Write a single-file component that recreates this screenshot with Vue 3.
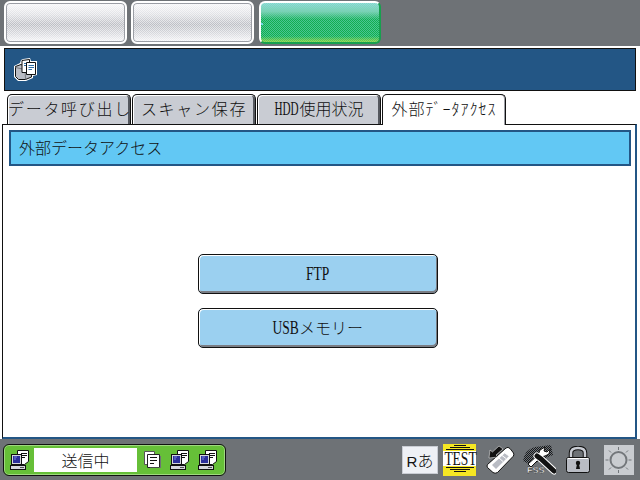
<script setup>
const tabs = [
  { id: 1, label: "データ呼び出し", spaced: true },
  { id: 2, label: "スキャン保存", spaced: true },
  { id: 3, latin: "HDD", label: "使用状況" },
  { id: 4, label: "外部ﾃﾞｰﾀｱｸｾｽ", active: true }
]
</script>

<template>
  <div class="screen">
    <div class="top-bar">
      <div class="mode-btn"></div>
      <div class="mode-btn"></div>
      <div class="mode-btn is-active"></div>
    </div>

    <main class="main">
      <header class="title-bar">
        <svg width="24" height="23" viewBox="0 0 24 23">
          <path d="M0 8 L6 5 L7 2 L9 1 L16 0 L17 3 L23 3 L23 17 L19 18 L19 20 L12 23 L4 23 L0 19 Z" fill="#fff" />
          <path d="M1.5 8.5 L7 6.5 L11 8.5 L17 8.5 L17.5 19 L11.5 21.5 L4.5 21.5 L1.5 18.5 Z" fill="#b9bcc4" stroke="#111" />
          <path d="M1.5 9.5 L11 11.5 L11.5 21" fill="none" stroke="#777a80" />
          <path d="M8 2.5 L15.5 1.5 V14.5 H8 Z" fill="#fff" stroke="#111" />
          <path d="M10 5.5 H13 M10 7.5 H13" stroke="#2f6ea5" />
          <path d="M12.5 4.5 H21.5 V16.5 H12.5 Z" fill="#fff" stroke="#111" />
          <path d="M14.5 7.5 H20 M14.5 9.5 H20 M14.5 11.5 H18" stroke="#2f6ea5" />
        </svg>
      </header>

      <nav class="tabs">
        <div
          v-for="tab in tabs"
          :key="tab.id"
          class="tab"
          :class="{ 'is-active': tab.active, 'is-spaced': tab.spaced }"
        ><span v-if="tab.latin" class="narrow">{{ tab.latin }}</span>{{ tab.label }}</div>
      </nav>

      <section class="panel">
        <div class="panel-title">外部データアクセス</div>
        <div class="actions">
          <button class="action"><span class="narrow">FTP</span></button>
          <button class="action"><span class="narrow">USB</span>メモリー</button>
        </div>
      </section>
    </main>

    <footer class="status-bar">
      <div class="job-pill">
        <svg width="20" height="20" viewBox="0 0 20 20">
          <use href="#pc-icon" />
        </svg>
        <div class="job-text">送信中</div>
        <svg class="job-doc" width="17" height="17" viewBox="0 0 17 17">
          <path d="M0.5 0.5 H10.5 V13.5 H0.5 Z" fill="#fff" stroke="#555" />
          <path d="M3.5 3.5 H15.5 V16.5 H3.5 Z" fill="#fff" stroke="#222" />
          <path d="M16.5 5 V17 H6" fill="none" stroke="#6e7276" />
          <path d="M6 6.5 H13 M6 9.5 H13 M6 12.5 H10" stroke="#111" />
        </svg>
        <svg class="job-pc" width="20" height="20" viewBox="0 0 20 20">
          <use href="#pc-icon" />
        </svg>
        <svg class="job-pc-last" width="20" height="20" viewBox="0 0 20 20">
          <use href="#pc-icon" />
        </svg>
      </div>

      <div class="tray">
        <div class="ime"><span class="ime-r">R</span>あ</div>
        <div class="test-badge">
          <i class="line w1"></i>
          <i class="line w2"></i>
          <i class="line w3"></i>
          <span class="test-text"><span class="narrow">TEST</span></span>
          <i class="line w3"></i>
          <i class="line w2"></i>
          <i class="line w1"></i>
        </div>
        <svg class="usb" width="30" height="30" viewBox="0 0 30 30">
          <path d="M2.5 19.5 L21 3 Q23 1.5 25 3.5 L28.5 8 Q29.5 10 28 11.5 L12.5 27.5 Q10 29 8 27.5 L2.5 22.5 Q1.5 21 2.5 19.5 Z" fill="#fff" stroke="#111" />
          <path d="M7 20 L20 8 L24 11 L11 24 Z" fill="#b9bcc4" />
          <path d="M20 8 L24 11 M17 10.5 L21 13.5 M14 13 L18 16.5" stroke="#fff" />
          <path d="M4 13 L5 5 L7.5 7 L14 1 L18 4 L11 10 L13 12 Z" fill="#111" stroke="#fff" stroke-width="0.5" />
        </svg>
        <svg class="fss-icon" width="33" height="30" viewBox="0 0 33 30">
          <defs>
            <pattern id="dots" width="2" height="2" patternUnits="userSpaceOnUse">
              <rect width="1" height="1" fill="#17191c" />
              <rect x="1" y="1" width="1" height="1" fill="#17191c" />
            </pattern>
          </defs>
          <path d="M0 16 Q2 4 12 2 L28 0 L30 10 L20 14 L8 20 Z" fill="url(#dots)" />
          <path d="M5 19 L15 10 L17 5 L22 2 L21 6 L24 7 L27 4 L26 9 L22 11 L18 12 L8 22 Z" fill="#fff" stroke="#111" />
          <path d="M14 11 L18 14 L31 26" fill="none" stroke="#fff" stroke-width="7" stroke-linecap="round" />
          <path d="M14 11 L18 14 L31 26" fill="none" stroke="#111" stroke-width="5" stroke-linecap="round" />
          <text x="4" y="28" class="fss">FSS</text>
        </svg>
        <svg class="lock" width="24" height="27" viewBox="0 0 24 27">
          <path d="M5 12 V7 Q5 2 12 2 Q19 2 19 7 V12" fill="none" stroke="#111" stroke-width="4.5" />
          <path d="M5 12 V7 Q5 2 12 2 Q19 2 19 7 V12" fill="none" stroke="#c9ccd3" stroke-width="2.5" />
          <rect x="0.5" y="11.5" width="23" height="15" rx="2" fill="#b9bcc4" stroke="#111" />
          <path d="M1.5 12.5 H22.5" stroke="#fff" />
          <circle cx="12" cy="17" r="2.2" fill="#111" />
          <path d="M11 18 H13 L14 23 H10 Z" fill="#111" />
        </svg>
        <div class="sun">
          <svg width="30" height="30" viewBox="0 0 30 30">
            <circle cx="14.5" cy="15" r="8" fill="#c9ccd0" stroke="#73777b" stroke-width="2" />
            <path d="M14.5 2 V5 M14.5 25 V28 M1.5 15 H4.5 M24.5 15 H27.5 M5 5.5 L7 7.5 M22 22.5 L24 24.5 M24 5.5 L22 7.5 M7 22.5 L5 24.5" stroke="#73777b" />
          </svg>
        </div>
      </div>
    </footer>

    <svg width="0" height="0" class="defs">
      <defs>
        <g id="pc-icon">
          <path d="M7.5 0.5 H18.5 V11.5 L14.5 14.5 H7.5 Z" fill="#fff" stroke="#111" />
          <path d="M11 3.5 H17 M11 5.5 H17 M11 7.5 H15" stroke="#111" />
          <rect x="1.5" y="4.5" width="10" height="10" fill="#d5d7dc" stroke="#111" />
          <rect x="3" y="6" width="7" height="7" fill="#2b2f9a" />
          <path d="M4 7 H7 M4 9 H6" stroke="#7f86e0" />
          <rect x="0.5" y="15.5" width="15" height="4" fill="#d5d7dc" stroke="#111" />
          <path d="M10 17.5 H14" stroke="#555" />
        </g>
      </defs>
    </svg>
  </div>
</template>

<style scoped>
.screen {
  position: relative;
  width: 640px;
  height: 480px;
  display: flex;
  flex-direction: column;
  background: #6e7276;
  overflow: hidden;
  font-family: "Noto Sans CJK JP", "Liberation Sans", sans-serif;
  font-weight: 300;
  color: #111;
}

.top-bar {
  height: 46px;
  box-sizing: border-box;
  padding: 1px 0 0 4px;
  display: flex;
  gap: 4px;
}

.mode-btn {
  width: 123px;
  height: 43px;
  box-sizing: border-box;
  border: 2px solid #fff;
  border-radius: 6px;
  box-shadow: 0 0 0 1px #9b9ea5 inset;
  background:
    repeating-conic-gradient(rgba(255, 255, 255, 0.55) 0 25%, transparent 0 50%) 0 0 / 2px 2px,
    linear-gradient(#f8f8fa 0%, #dfe0e4 30%, #bcbec4 55%, #dadbe0 80%, #f7f7f9 100%);
}

.mode-btn.is-active {
  width: 122px;
  margin-left: 1px;
  border-color: #fff #17a04e #17a04e #fff;
  box-shadow: none;
  background:
    radial-gradient(circle at 1px 1px, #6fd6e0 0.8px, transparent 1px) 0 20px / 6px 4px no-repeat,
    repeating-conic-gradient(rgba(110, 215, 190, 0.6) 0 25%, transparent 0 50%) 0 0 / 2px 2px,
    linear-gradient(#9adcdc 0%, #7dcfb0 22%, #13ad50 42%, #12ad4f 85%, #9ad42c 100%);
}

.main {
  flex: 1;
  display: flex;
  flex-direction: column;
  background: #fff;
  padding: 2px 3px 0 2px;
  min-height: 0;
}

.title-bar {
  height: 43px;
  margin: 0 1px 0 2px;
  box-sizing: border-box;
  border: 1px solid #111;
  background: #235685;
  display: flex;
  align-items: center;
  padding-left: 9px;
}

.tabs {
  display: flex;
  gap: 1px;
  height: 30px;
  margin-top: 3px;
  padding-left: 5px;
  position: relative;
  z-index: 1;
}

.tab {
  width: 124px;
  height: 30px;
  box-sizing: border-box;
  border: 1px solid #111;
  border-bottom: none;
  border-radius: 5px 5px 0 0;
  box-shadow: inset 1px 1px 0 #fff, inset -2px 0 0 #55585e;
  background: #c9ccd3;
  font-size: 16px;
  line-height: 27px;
  text-align: center;
  white-space: nowrap;
  overflow: hidden;
}

.tab.is-spaced {
  letter-spacing: 1.7px;
}

.tab.is-active {
  height: 31px;
  background: #fff;
  box-shadow: inset -1px 0 0 #9b9ea5;
  letter-spacing: 1px;
}

.tab .narrow {
  transform: scaleX(0.62);
  margin: 0 -7px;
}

.panel {
  flex: 1;
  display: flex;
  flex-direction: column;
  box-sizing: border-box;
  border: 1px solid #111;
  border-right: 2px solid #235685;
  border-bottom: 2px solid #235685;
  background: #fff;
  padding: 5px 4px 0 6px;
  min-height: 0;
}

.panel-title {
  height: 36px;
  box-sizing: border-box;
  border: 2px solid #235685;
  background: #62c8f4;
  font-size: 16px;
  line-height: 30px;
  padding-left: 8px;
}

.actions {
  display: flex;
  flex-direction: column;
  align-items: center;
  gap: 14px;
  padding: 88px 4px 0 0;
}

.action {
  width: 240px;
  height: 40px;
  box-sizing: border-box;
  border: 1px solid #111;
  border-radius: 5px;
  box-shadow: inset 1px 1px 0 #fff, inset -1px -2px 0 #7a7d84;
  background: #9bd0f0;
  font: inherit;
  font-size: 16px;
  color: #111;
  padding: 0 0 2px;
}

.narrow {
  display: inline-block;
  font-family: "Liberation Serif", serif;
  font-size: 18px;
  transform: scaleX(0.75);
  margin: 0 -4.5px;
  letter-spacing: 0;
}

.status-bar {
  height: 41px;
  box-sizing: border-box;
  display: flex;
  align-items: center;
  justify-content: space-between;
  padding: 0 6px 0 3px;
}

.job-pill {
  width: 223px;
  height: 32px;
  box-sizing: border-box;
  border: 1px solid #111;
  border-radius: 6px;
  box-shadow: inset 0 0 0 1px #9fd87f;
  background: #66bf38;
  display: flex;
  align-items: center;
  padding-left: 6px;
}

.job-text {
  width: 103px;
  height: 24px;
  margin-left: 4px;
  background: #fff;
  font-size: 16px;
  line-height: 24px;
  text-align: center;
  letter-spacing: 0;
}

.job-doc {
  margin-left: 7px;
}

.job-pc {
  margin-left: 9px;
}

.job-pc-last {
  margin-left: 8px;
}

.tray {
  display: flex;
  align-items: center;
}

.ime {
  width: 36px;
  height: 28px;
  box-sizing: border-box;
  border: 1px solid #c9ccd3;
  background: #eef0f5;
  font-size: 16px;
  line-height: 26px;
  text-align: center;
}

.ime-r {
  font-family: "Liberation Sans", sans-serif;
  font-size: 15px;
}

.test-badge {
  width: 33px;
  height: 32px;
  margin-left: 5px;
  background: #f5e723;
  display: flex;
  flex-direction: column;
  align-items: center;
  gap: 1px;
  padding-top: 1px;
  box-sizing: border-box;
}

.line {
  display: block;
  height: 1px;
  background: #111;
}

.w1 {
  width: 12px;
}

.w2 {
  width: 20px;
}

.w3 {
  width: 28px;
}

.test-text {
  display: block;
  width: 100%;
  height: 15px;
  background: #fff;
  text-align: center;
  line-height: 15px;
}

.usb {
  margin-left: 9px;
}

.fss-icon {
  margin-left: 8px;
}

.lock {
  margin-left: 10px;
}

.sun {
  background: #c9ccd0;
  width: 30px;
  height: 30px;
  margin-left: 14px;
}

.fss {
  font-family: "Liberation Sans", sans-serif;
  font-size: 9px;
  font-weight: 700;
  fill: #fff;
  stroke: #111;
  stroke-width: 0.3px;
}

.defs {
  position: absolute;
}
</style>
